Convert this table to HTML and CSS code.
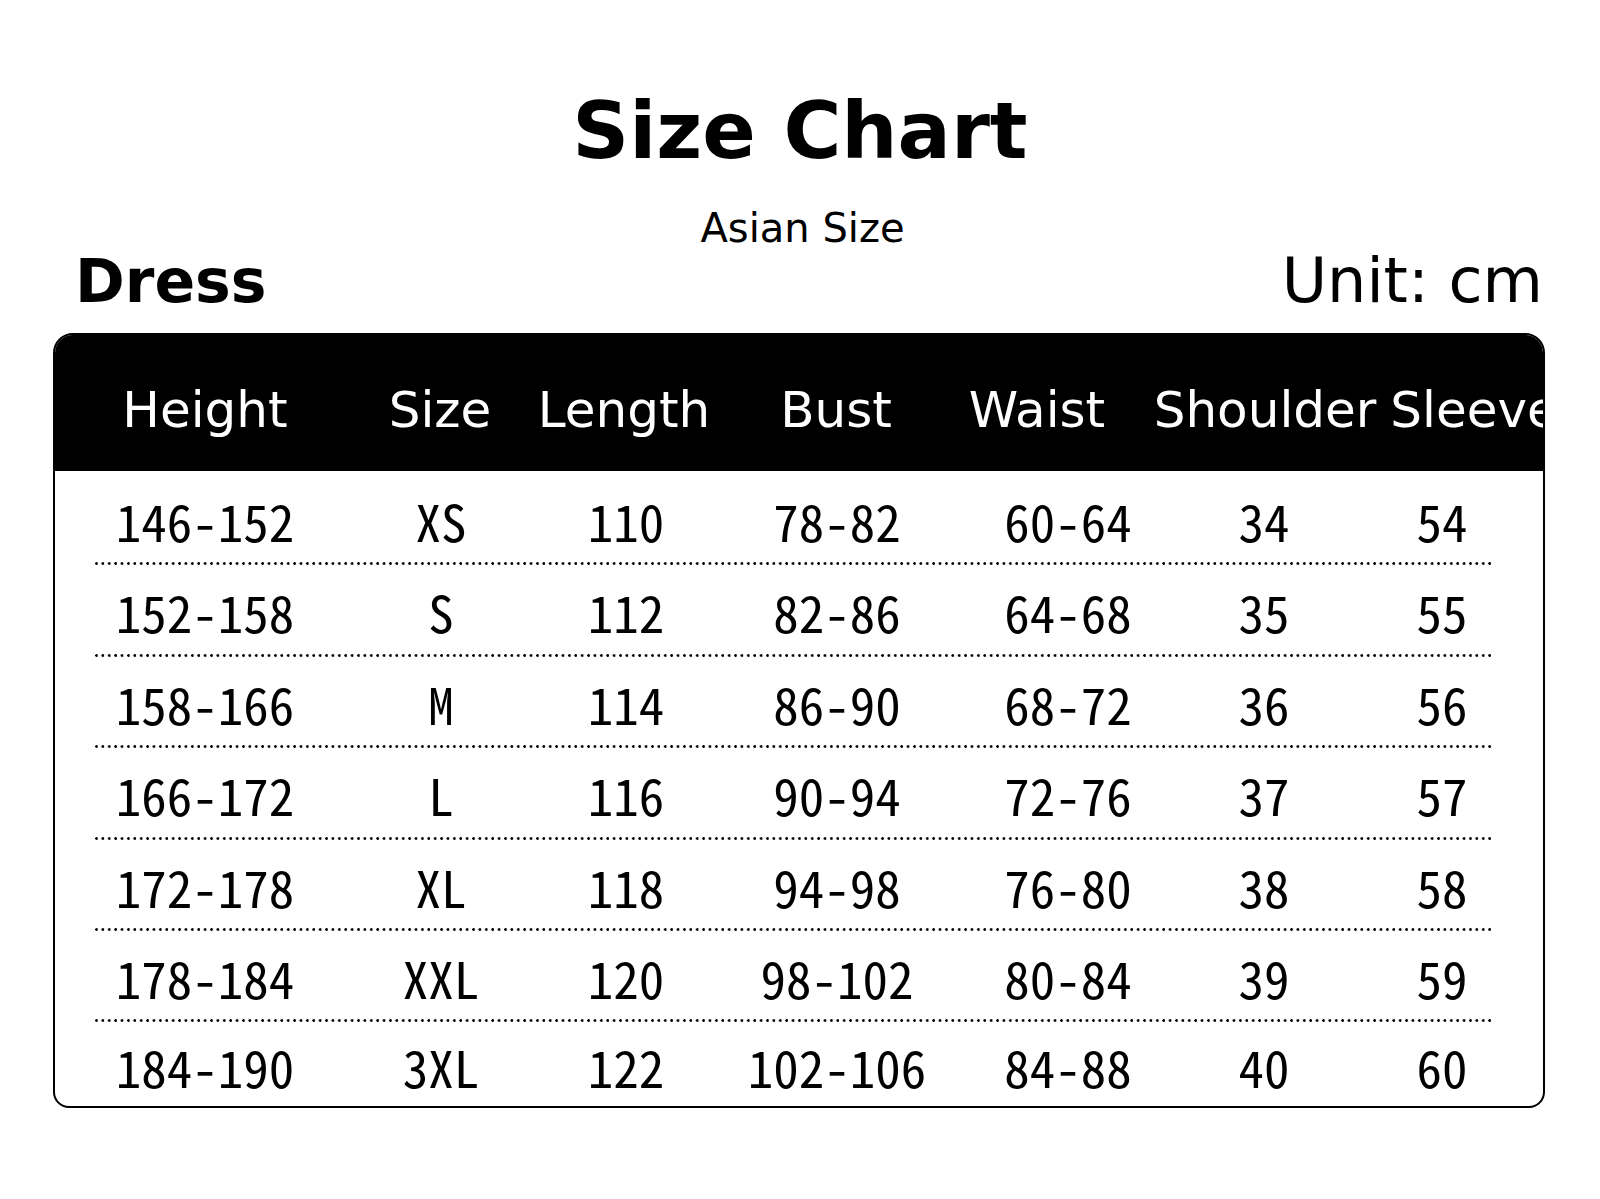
FILE: index.html
```html
<!DOCTYPE html>
<html lang="en">
<head>
<meta charset="utf-8">
<title>Size Chart</title>
<link rel="stylesheet" href="styles.css">
</head>
<body>
<div class="page">
  <h1 class="title">Size Chart</h1>
  <div class="subtitle">Asian Size</div>
  <div class="meta">
    <div class="product">Dress</div>
    <div class="unit">Unit: cm</div>
  </div>
  <div class="chart">
    <div class="head">
      <div>Height</div><div>Size</div><div>Length</div><div>Bust</div><div>Waist</div><div>Shoulder</div><div>Sleeve</div>
    </div>
    <div class="body">
      <div class="row"><div>146-152</div><div>XS</div><div>110</div><div>78-82</div><div>60-64</div><div>34</div><div>54</div></div>
      <div class="row"><div>152-158</div><div>S</div><div>112</div><div>82-86</div><div>64-68</div><div>35</div><div>55</div></div>
      <div class="row"><div>158-166</div><div>M</div><div>114</div><div>86-90</div><div>68-72</div><div>36</div><div>56</div></div>
      <div class="row"><div>166-172</div><div>L</div><div>116</div><div>90-94</div><div>72-76</div><div>37</div><div>57</div></div>
      <div class="row"><div>172-178</div><div>XL</div><div>118</div><div>94-98</div><div>76-80</div><div>38</div><div>58</div></div>
      <div class="row"><div>178-184</div><div>XXL</div><div>120</div><div>98-102</div><div>80-84</div><div>39</div><div>59</div></div>
      <div class="row"><div>184-190</div><div>3XL</div><div>122</div><div>102-106</div><div>84-88</div><div>40</div><div>60</div></div>
    </div>
  </div>
</div>
</body>
</html>
```

FILE: styles.css
```css
html, body {
  margin: 0;
  padding: 0;
  background: #ffffff;
}
body {
  font-family: "DejaVu Sans", Verdana, sans-serif;
  color: #000;
}
.page {
  width: 1600px;
  height: 1199px;
  box-sizing: border-box;
  padding: 91px 55px 0 53px;
}
.title {
  margin: 0;
  font-size: 79px;
  line-height: 81px;
  font-weight: bold;
  text-align: center;
  padding-left: 2px;
}
.subtitle {
  margin-top: 36px;
  font-size: 40px;
  line-height: 40px;
  text-align: center;
  padding-left: 7px;
}
.meta {
  margin-top: 3px;
  display: flex;
  justify-content: space-between;
  font-size: 60px;
  line-height: 60px;
}
.product {
  font-weight: bold;
  padding-left: 22px;
}
.unit {
  font-size: 62px;
  padding-right: 2px;
}
.chart {
  margin-top: 22px;
  border: 2px solid #000;
  border-radius: 20px 20px 16px 16px;
  overflow: hidden;
  width: 1488px;
}
.head {
  background: #000;
  color: #fff;
  display: grid;
  grid-template-columns: 300px 170px 198px 226px 176px 280px 138px;
  justify-items: center;
  padding-top: 14px;
  height: 122px;
  font-size: 50px;
  line-height: 122px;
  white-space: nowrap;
}
.body {
  padding-top: 3px;
  font-family: "Noto Sans CJK JP", "Noto Sans CJK SC", sans-serif;
  font-feature-settings: "hwid" 1;
  font-size: 51px;
}
.row {
  display: grid;
  grid-template-columns: 300px 172px 198px 224px 238px 154px 202px;
  justify-items: center;
  white-space: nowrap;
}
.row > div {
  padding-top: 5px;
  line-height: 82.4px;
}
.row::after {
  content: "";
  grid-column: 1 / -1;
  justify-self: stretch;
  height: 3px;
  margin: 1px 50px 0 40px;
  background-image: radial-gradient(circle at 1.5px 1.5px, #000 1.1px, rgba(0,0,0,0) 1.6px);
  background-size: 6.4px 3px;
  background-repeat: repeat-x;
}
.row:last-child::after {
  display: none;
}
.row:last-child > div {
  line-height: 79px;
}
```
